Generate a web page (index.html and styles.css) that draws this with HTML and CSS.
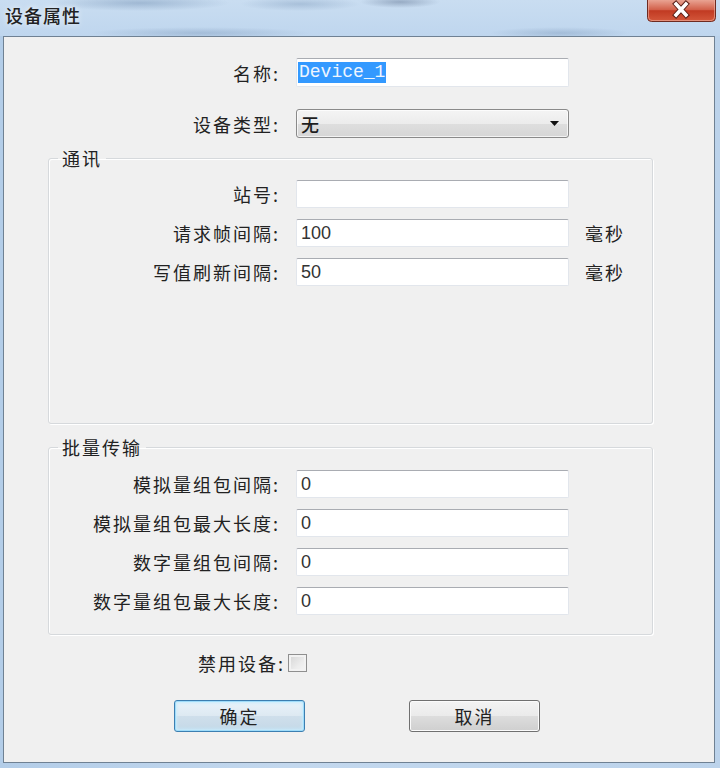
FILE: index.html
```html
<!DOCTYPE html>
<html lang="zh-CN">
<head>
  <meta charset="UTF-8">
  <title>设备属性</title>
  <link rel="stylesheet" href="styles.css">
</head>
<body>
  <div class="titlebar">
    <span class="title">设备属性</span>
    <svg class="close" width="69" height="22" viewBox="0 0 69 22">
      <defs>
        <linearGradient id="red" x1="0" y1="0" x2="0" y2="1">
          <stop offset="0" stop-color="#e9a392"/>
          <stop offset="0.45" stop-color="#d2604a"/>
          <stop offset="0.5" stop-color="#c13a22"/>
          <stop offset="1" stop-color="#d4583c"/>
        </linearGradient>
      </defs>
      <path d="M0.5 0 V17.5 Q0.5 21.5 4.5 21.5 H64.5 Q68.5 21.5 68.5 17.5 V0" fill="url(#red)" stroke="#6e2a20"/>
      <path d="M1.5 0 V17 Q1.5 20.5 5 20.5 H64 Q67.5 20.5 67.5 17 V0" fill="none" stroke="#f0b4a4" stroke-opacity="0.6"/>
      <path d="M29 4 L39 15 M39 4 L29 15" stroke="#5a1f17" stroke-width="5.5" stroke-linecap="square"/>
      <path d="M29 4 L39 15 M39 4 L29 15" stroke="#ffffff" stroke-width="3.5" stroke-linecap="square"/>
    </svg>
  </div>

  <div class="client">
    <div class="row first">
      <label>名称:</label>
      <div class="field name"><span class="selected">Device_1</span></div>
    </div>
    <div class="row">
      <label>设备类型:</label>
      <div class="combo">
        <span>无</span>
        <svg width="9" height="5" viewBox="0 0 9 5"><path d="M0 0 H9 L4.5 5 Z" fill="#111"/></svg>
      </div>
    </div>

    <fieldset class="group comm">
      <legend>通讯</legend>
      <div class="row">
        <label>站号:</label>
        <input class="field" type="text" value="">
      </div>
      <div class="row">
        <label>请求帧间隔:</label>
        <input class="field" type="text" value="100">
        <span class="unit">毫秒</span>
      </div>
      <div class="row">
        <label>写值刷新间隔:</label>
        <input class="field" type="text" value="50">
        <span class="unit">毫秒</span>
      </div>
    </fieldset>

    <fieldset class="group batch">
      <legend>批量传输</legend>
      <div class="row">
        <label>模拟量组包间隔:</label>
        <input class="field" type="text" value="0">
      </div>
      <div class="row">
        <label>模拟量组包最大长度:</label>
        <input class="field" type="text" value="0">
      </div>
      <div class="row">
        <label>数字量组包间隔:</label>
        <input class="field" type="text" value="0">
      </div>
      <div class="row">
        <label>数字量组包最大长度:</label>
        <input class="field" type="text" value="0">
      </div>
    </fieldset>

    <div class="check-row">
      <label for="disable">禁用设备:</label>
      <input class="check" type="checkbox" id="disable">
    </div>

    <div class="buttons">
      <button class="btn default">确定</button>
      <button class="btn">取消</button>
    </div>
  </div>
</body>
</html>
```

FILE: styles.css
```css
body {
  margin: 0;
  width: 720px;
  height: 768px;
  overflow: hidden;
  font-family: "Noto Sans CJK SC", "Liberation Sans", sans-serif;
  color: #1e1e1e;
  background: linear-gradient(90deg, #b3cde8 0%, #c3d8ee 40%, #bcd3eb 100%);
}
.titlebar {
  height: 36px;
  display: flex;
  justify-content: space-between;
  align-items: flex-start;
  padding-left: 5px;
  background:
    radial-gradient(ellipse 90px 8px at 140px 3px, rgba(110, 140, 175, 0.45), transparent),
    radial-gradient(ellipse 60px 7px at 300px 4px, rgba(110, 140, 175, 0.35), transparent),
    radial-gradient(ellipse 40px 6px at 400px 2px, rgba(90, 110, 140, 0.45), transparent),
    radial-gradient(ellipse 70px 6px at 560px 33px, rgba(110, 140, 175, 0.35), transparent),
    radial-gradient(ellipse 110px 6px at 200px 33px, rgba(110, 140, 175, 0.35), transparent),
    linear-gradient(180deg, #c9ddf1 0%, #bfd6ee 100%);
}
.title {
  font-size: 18px;
  line-height: 30px;
  letter-spacing: 1px;
  font-weight: 500;
  color: #222;
  text-shadow: 0 0 6px rgba(255, 255, 255, 0.9);
}
.close {
  display: block;
  margin-right: 4px;
}
.client {
  box-sizing: border-box;
  height: 727px;
  margin: 0 5px 0 3px;
  border: 1px solid #6f8193;
  background: #f0f0f0;
  --label: 284px;
}
.row {
  display: grid;
  grid-template-columns: var(--label) 273px auto;
  column-gap: 8px;
  align-items: center;
  height: 28px;
  margin-top: 11px;
}
.row.first {
  margin-top: 21px;
  height: 29px;
}
.row + .row {
  margin-top: 11px;
}
.client > .row + .row {
  margin-top: 22px;
  height: 29px;
}
.row label, .check-row label {
  text-align: right;
  font-size: 18px;
  letter-spacing: 2px;
  line-height: 22px;
  color: #222;
}
.row label {
  padding-right: 8px;
}
.field {
  box-sizing: border-box;
  height: 100%;
  width: 273px;
  margin: 0;
  padding: 0 4px;
  border: 1px solid #e2e6ec;
  border-top-color: #a9acb2;
  border-radius: 2px;
  background: #fff;
  font-family: "Liberation Sans", sans-serif;
  font-size: 18px;
  color: #333;
  outline: none;
}
.field.name {
  display: flex;
  align-items: center;
  padding-left: 1px;
}
.selected {
  font-family: "Liberation Mono", monospace;
  font-size: 18px;
  line-height: 21px;
  background: #3399ff;
  color: #eef5ff;
  padding: 0 1px;
}
.combo {
  box-sizing: border-box;
  height: 100%;
  width: 273px;
  display: flex;
  justify-content: space-between;
  align-items: center;
  padding: 0 9px 0 4px;
  border: 1px solid #8a8a8a;
  border-radius: 3px;
  background: linear-gradient(180deg, #f4f4f4 0%, #ececec 50%, #dedede 51%, #d6d6d6 100%);
  box-shadow: inset 0 0 0 1px rgba(255, 255, 255, 0.7);
  font-size: 18px;
  font-weight: 500;
}
.unit {
  margin-left: 8px;
  font-size: 18px;
  letter-spacing: 2px;
  color: #222;
}
.group {
  --label: 239px;
  margin: 10px 61px 0 44px;
  padding: 12px 0 0 0;
  border: 1px solid #d6d9dc;
  border-radius: 3px;
  box-shadow: inset 1px 1px 0 #fff, 1px 1px 0 #fff;
}
.group legend {
  margin-left: 9px;
  padding: 0 4px;
  font-size: 18px;
  line-height: 20px;
  letter-spacing: 2px;
  color: #222;
}
.group .row:first-of-type {
  margin-top: 0;
}
.comm {
  padding-bottom: 137px;
}
.batch {
  margin-top: 13px;
  padding-top: 13px;
  padding-bottom: 19px;
}
.check-row {
  display: flex;
  align-items: center;
  height: 17px;
  margin-top: 19px;
}
.check-row label {
  width: 281px;
}
.check {
  appearance: none;
  box-sizing: border-box;
  width: 19px;
  height: 18px;
  margin: 0 0 0 3px;
  border: 1px solid #8f8f8f;
  background: linear-gradient(135deg, #d4d4d4 0%, #ececec 60%, #f6f6f6 100%);
  box-shadow: inset 0 0 0 2px #f2f2f2;
}
.buttons {
  display: flex;
  gap: 104px;
  margin-top: 29px;
  padding-left: 170px;
}
.btn {
  box-sizing: border-box;
  width: 131px;
  height: 32px;
  border: 1px solid #707070;
  border-radius: 3px;
  background: linear-gradient(180deg, #f3f3f3 0%, #ebebeb 50%, #dddddd 51%, #cfcfcf 100%);
  box-shadow: inset 0 0 0 1px #fbfbfb;
  font-family: "Noto Sans CJK SC", sans-serif;
  font-size: 18px;
  letter-spacing: 2px;
  color: #222;
}
.btn.default {
  border-color: #3c7fb1;
  background: linear-gradient(180deg, #eaf3fa 0%, #dde9f2 50%, #cfdfeb 51%, #c4d8e8 100%);
  box-shadow: inset 0 0 0 1px #9fdcfa, inset 0 0 3px 2px #c7ecfd;
}
```
